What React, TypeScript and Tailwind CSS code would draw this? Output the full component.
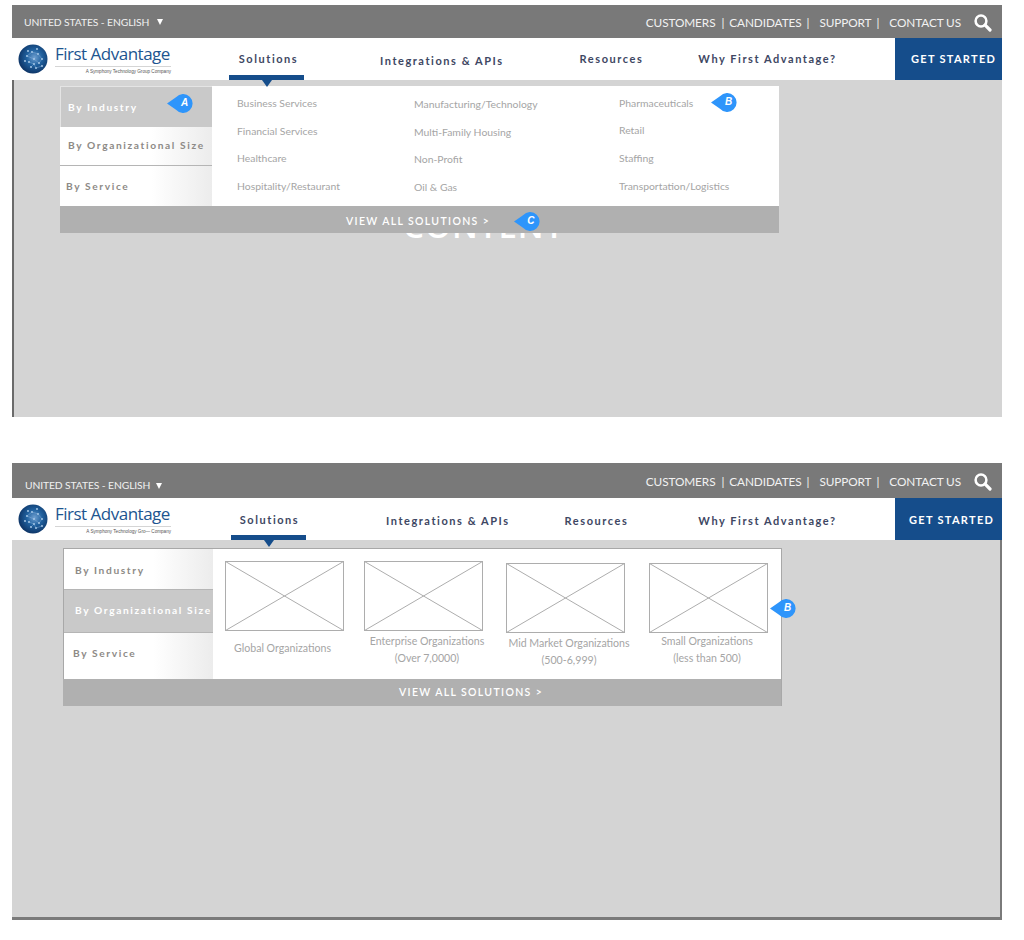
import type { ReactNode } from "react";

const FONT = "font-['Lato','Open_Sans',sans-serif]";

function Globe() {
  const dots = [
    [9, 12], [14, 8], [20, 10], [24, 15], [11, 18], [16, 15], [21, 19], [7, 17], [13, 23], [18, 24], [24, 22], [16, 20], [19, 5], [10, 7],
  ];
  return (
    <svg width="30" height="30" viewBox="0 0 30 30" className="shrink-0">
      <defs>
        <radialGradient id="globe" cx="55%" cy="45%" r="60%">
          <stop offset="0%" stopColor="#6f9fd0" />
          <stop offset="45%" stopColor="#20619f" />
          <stop offset="100%" stopColor="#0b2f5f" />
        </radialGradient>
      </defs>
      <circle cx="15" cy="15" r="14.5" fill="url(#globe)" />
      {dots.map(([x, y]) => (
        <circle key={`${x}-${y}`} cx={x} cy={y} r="0.9" fill="#b5d3ee" />
      ))}
      <path d="M9 12L14 8L20 10L24 15L21 19L16 15L9 12M11 18L16 20L13 23M16 20L18 24L24 22" fill="none" stroke="#8db7dd" strokeWidth="0.4" />
    </svg>
  );
}

function Logo({ tagline }: { tagline: string }) {
  return (
    <div className="flex shrink-0 items-center gap-[7px]">
      <Globe />
      <div className="w-[116px]">
        <div className="font-['Open_Sans',sans-serif] text-[17px] leading-[22px] font-medium tracking-[-0.5px] whitespace-nowrap text-[#1d5590]">
          First Advantage
        </div>
        <div className="mt-[1px] border-t border-[#d5d5d5] pt-[2px] text-right font-['Liberation_Sans',sans-serif] text-[4.6px] leading-[6px] whitespace-nowrap text-[#555]">
          {tagline}
        </div>
      </div>
    </div>
  );
}

function SearchIcon() {
  return (
    <svg width="18" height="18" viewBox="0 0 18 18" fill="none" stroke="white" strokeLinecap="round">
      <circle cx="7" cy="7" r="5.4" strokeWidth="2.5" />
      <path d="M11.2 11.2L16 16" strokeWidth="3.2" />
    </svg>
  );
}

function TopBar({ className, leftClass, rightClass, caretClass }: { className: string; leftClass: string; rightClass: string; caretClass: string }) {
  return (
    <div className={`flex bg-[#797979] text-white ${className}`}>
      <div className={`flex items-center text-[10.3px] tracking-[-0.1px] text-[#f0f0f0] ${leftClass}`}>
        UNITED STATES - ENGLISH
        <span className={`inline-block h-0 w-0 border-x-[3.5px] border-t-[6px] border-x-transparent border-t-white ${caretClass}`} />
      </div>
      <div className={`ml-auto flex h-full items-center pr-[10px] text-[11.8px] tracking-[-0.1px] text-[#f2f2f2] ${rightClass}`}>
        <span>CUSTOMERS</span>
        <span className="ml-[6px]">|</span>
        <span className="ml-[5px]">CANDIDATES</span>
        <span className="ml-[5px]">|</span>
        <span className="ml-[10px]">SUPPORT</span>
        <span className="ml-[5px]">|</span>
        <span className="ml-[10px]">CONTACT US</span>
        <span className="ml-[13px]">
          <SearchIcon />
        </span>
      </div>
    </div>
  );
}

const NAV_TEXT = "text-[11px] font-bold tracking-[1.55px] whitespace-nowrap text-[#3e4763]";

function ActiveNav({ className, textClass }: { className: string; textClass: string }) {
  return (
    <div className={`relative flex h-full w-[75px] shrink-0 flex-col items-center ${className}`}>
      <span className={`${NAV_TEXT} ${textClass}`}>Solutions</span>
      <div className="mt-auto h-[5px] w-full bg-[#154d8b]" />
      <span className="absolute top-full left-[33px] z-20 h-0 w-0 border-x-[5px] border-t-[7px] border-x-transparent border-t-[#154d8b]" />
    </div>
  );
}

function GetStarted({ textClass }: { textClass: string }) {
  return (
    <div className={`ml-auto flex h-full w-[107px] shrink-0 items-center bg-[#154d8b] text-[11px] font-bold tracking-[1.3px] whitespace-nowrap text-white ${textClass}`}>
      GET STARTED
    </div>
  );
}

function Badge({ letter, className }: { letter: string; className: string }) {
  return (
    <div className={`absolute z-30 h-[19px] w-[27px] ${className}`}>
      <svg width="27" height="19" viewBox="0 0 27 19" className="absolute inset-0">
        <path d="M0 9.5L9 3.2A9.5 9.5 0 1 1 9 15.8Z" fill="#2e95fb" />
      </svg>
      <span className="absolute top-0 left-[10px] w-[15px] text-center font-['Liberation_Sans',sans-serif] text-[10px] leading-[18px] font-bold text-white italic">
        {letter}
      </span>
    </div>
  );
}

const TAB_TEXT = "text-[10.2px] font-bold tracking-[1.62px] whitespace-nowrap";
const TAB_IDLE = "bg-[linear-gradient(90deg,#ffffff_60%,#ececec_100%)] text-[#8d8a86]";

function ViewAll({ className, children }: { className: string; children?: ReactNode }) {
  return (
    <div className={`relative flex h-[27px] bg-[#b0b0b0] text-[10.5px] font-semibold tracking-[1.35px] whitespace-nowrap text-white ${className}`}>
      <span>VIEW ALL SOLUTIONS &gt;</span>
      {children}
    </div>
  );
}

function LinkColumn({ items, className }: { items: string[]; className: string }) {
  return (
    <div className={`flex flex-col ${className}`}>
      {items.map((item) => (
        <div key={item} className="flex h-[27.7px] items-center text-[10.4px] whitespace-nowrap text-[#a5a5a5]">
          {item}
        </div>
      ))}
    </div>
  );
}

function Placeholder({ className }: { className: string }) {
  return (
    <svg width="119" height="70" viewBox="0 0 119 70" fill="none" stroke="#adadad" className={`shrink-0 ${className}`}>
      <rect x="0.5" y="0.5" width="118" height="69" />
      <path d="M0.5 0.5L118.5 69.5M118.5 0.5L0.5 69.5" />
    </svg>
  );
}

function SizeCard({ className, imageClass, lines, textClass }: { className: string; imageClass: string; lines: string[]; textClass: string }) {
  return (
    <div className={`flex w-[119px] shrink-0 flex-col items-center text-[10.6px] whitespace-nowrap text-[#a5a5a5] ${className}`}>
      <Placeholder className={imageClass} />
      <div className={`flex flex-col items-center gap-[5px] leading-[12px] ${textClass}`}>
        {lines.map((line) => (
          <span key={line}>{line}</span>
        ))}
      </div>
    </div>
  );
}

function IndustryPanel() {
  return (
    <section>
      <TopBar className="h-[33px]" leftClass="pl-[12px] pt-[2px]" rightClass="pt-[2px]" caretClass="ml-[8px] -mt-[2px]" />
      <div className="flex h-[42px] items-center bg-white pl-[6px]">
        <Logo tagline="A Symphony Technology Group Company" />
        <ActiveNav className="ml-[58px]" textClass="mt-[13px] ml-[4px]" />
        <span className={`${NAV_TEXT} ml-[76px] mt-[4px]`}>Integrations &amp; APIs</span>
        <span className={`${NAV_TEXT} ml-[76px]`}>Resources</span>
        <span className={`${NAV_TEXT} ml-[55px]`}>Why First Advantage?</span>
        <GetStarted textClass="pl-[16px]" />
      </div>
      <div className="relative h-[337px] overflow-hidden border-l-2 border-[#6a6a6a] bg-[#d4d4d4]">
        <div className="pt-[126px] pl-[389px] font-['Open_Sans',sans-serif] text-[33px] leading-[40px] font-semibold tracking-[1px] text-white">CONTENT</div>
        <div className="absolute top-[6px] left-[46px] w-[719px]">
          <div className="flex h-[120px]">
            <div className="flex w-[152px] shrink-0 flex-col">
              <div className={`${TAB_TEXT} flex h-[41px] items-center border-t border-l border-[#e4e4e4] bg-[#c9c9c9] pt-[2px] pl-[7px] text-white`}>By Industry</div>
              <div className={`${TAB_TEXT} ${TAB_IDLE} flex h-[39px] items-center border-b border-[#b5b5b5] pl-[8px]`}>By Organizational Size</div>
              <div className={`${TAB_TEXT} ${TAB_IDLE} flex h-[40px] items-center pt-[2px] pl-[6px]`}>By Service</div>
            </div>
            <div className="flex flex-1 bg-white">
              <LinkColumn className="ml-[25px] w-[177px] pt-[4px]" items={["Business Services", "Financial Services", "Healthcare", "Hospitality/Restaurant"]} />
              <LinkColumn className="w-[205px] pt-[5px]" items={["Manufacturing/Technology", "Multi-Family Housing", "Non-Profit", "Oil & Gas"]} />
              <LinkColumn className="pt-[3.5px]" items={["Pharmaceuticals", "Retail", "Staffing", "Transportation/Logistics"]} />
            </div>
          </div>
          <ViewAll className="items-center pt-[4px] pl-[286px]">
            <Badge letter="C" className="top-[6px] left-[454px]" />
          </ViewAll>
          <Badge letter="A" className="top-[8px] left-[107px]" />
          <Badge letter="B" className="top-[7px] left-[651px]" />
        </div>
      </div>
    </section>
  );
}

function SizePanel() {
  return (
    <section className="mt-[46px]">
      <TopBar className="h-[35px]" leftClass="pl-[13px] pt-[10px]" rightClass="pt-[3px]" caretClass="ml-[6px]" />
      <div className="flex h-[42px] items-center bg-white pl-[6px]">
        <Logo tagline="A Symphony Technology Gro— Company" />
        <ActiveNav className="ml-[60px]" textClass="mt-[14px] ml-[2px]" />
        <span className={`${NAV_TEXT} ml-[80px] mt-[4px]`}>Integrations &amp; APIs</span>
        <span className={`${NAV_TEXT} ml-[55px] mt-[4px]`}>Resources</span>
        <span className={`${NAV_TEXT} ml-[70px] mt-[4px]`}>Why First Advantage?</span>
        <GetStarted textClass="pl-[14px] pt-[2px]" />
      </div>
      <div className="relative h-[380px] border-r-2 border-b-[3px] border-[#7a7a7a] bg-[#d4d4d4]">
        <div className="absolute top-[8px] left-[51px] w-[719px] border-t border-r border-[#a8a8a8]">
          <div className="flex h-[130px]">
            <div className="flex w-[150px] shrink-0 flex-col border-l border-[#a8a8a8]">
              <div className={`${TAB_TEXT} ${TAB_IDLE} flex h-[41px] items-center border-b border-[#b5b5b5] pt-[3px] pl-[11px]`}>By Industry</div>
              <div className={`${TAB_TEXT} flex h-[43px] items-center border-b border-[#b5b5b5] bg-[#c9c9c9] pl-[11px] text-white`}>By Organizational Size</div>
              <div className={`${TAB_TEXT} ${TAB_IDLE} flex flex-1 items-center pb-[4px] pl-[9px]`}>By Service</div>
            </div>
            <div className="flex flex-1 bg-white">
              <SizeCard className="ml-[12px]" imageClass="mt-[12px]" textClass="mt-[11px] mr-[4px]" lines={["Global Organizations"]} />
              <SizeCard className="ml-[20px]" imageClass="mt-[12px]" textClass="mt-[4px] ml-[7px]" lines={["Enterprise Organizations", "(Over 7,0000)"]} />
              <SizeCard className="ml-[23px]" imageClass="mt-[14px]" textClass="mt-[4px] ml-[7px]" lines={["Mid Market Organizations", "(500-6,999)"]} />
              <SizeCard className="ml-[24px]" imageClass="mt-[14px]" textClass="mt-[2px] mr-[3px]" lines={["Small Organizations", "(less than 500)"]} />
            </div>
          </div>
          <ViewAll className="items-center pl-[336px]" />
          <Badge letter="B" className="top-[50px] left-[707px]" />
        </div>
      </div>
    </section>
  );
}

export default function App() {
  return (
    <div className={`min-h-[940px] bg-white pt-[5px] pl-[12px] ${FONT}`}>
      <div className="w-[990px]">
        <IndustryPanel />
        <SizePanel />
      </div>
    </div>
  );
}
